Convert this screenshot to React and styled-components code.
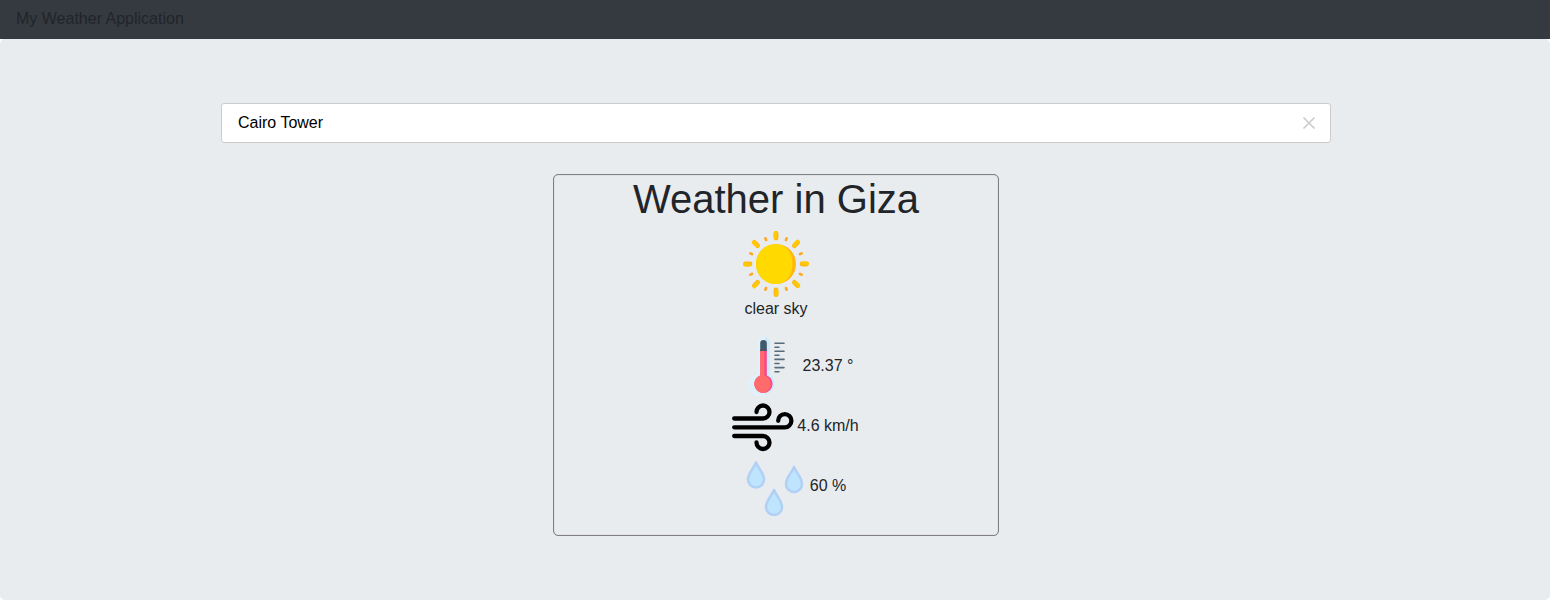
import React from 'react';
import styled, { createGlobalStyle } from 'styled-components';

const GlobalStyle = createGlobalStyle`
  *, *::before, *::after { box-sizing: border-box; }
  body {
    margin: 0;
    background: #fff;
    color: #212529;
    font: 16px/24px "Liberation Sans", Arial, sans-serif;
  }
`;

const Header = styled.header`
  padding: 7px 16px 8px;
  background: #343a40;
`;

const Jumbotron = styled.main`
  padding: 64px 31px 64px 33px;
  background: #e9ecef;
  border-radius: 5px;
`;

const Container = styled.div`
  max-width: 1110px;
  margin: 0 auto;
`;

const SearchBox = styled.form`
  display: flex;
  align-items: center;
  height: 40px;
  margin-bottom: 31px;
  padding: 0 14px 0 16px;
  background: #fff;
  border: 1px solid #ccc;
  border-radius: 3px;
`;

const SearchInput = styled.input`
  flex: 1;
  min-width: 0;
  padding: 0;
  border: 0;
  outline: 0;
  background: transparent;
  color: #000;
  font: inherit;
`;

const ClearButton = styled.button`
  display: flex;
  padding: 0;
  border: 0;
  background: none;
  cursor: pointer;
`;

const Card = styled.section`
  width: 446px;
  max-width: 100%;
  margin: 0 auto;
  padding-bottom: 19px;
  border: 1px solid #808080;
  border-radius: 5px;
  box-shadow: inset 0 0 1px #808080;
  text-align: center;
`;

const Title = styled.h1`
  margin: 0 0 8px;
  font-size: 40px;
  font-weight: 500;
  line-height: 48px;
`;

const Condition = styled.figure`
  display: flex;
  flex-direction: column;
  align-items: center;
  margin: 0 0 15px;
`;

const Readings = styled.ul`
  margin: 0;
  padding: 0 0 0 40px;
  list-style: none;
`;

const Reading = styled.li`
  display: flex;
  justify-content: center;
  align-items: center;
  gap: 4px;
  height: 60px;
`;

const rays = Array.from({ length: 8 }, (_, i) => i * 45);

function SunIcon() {
  return (
    <svg width="66" height="66" viewBox="-33 -33 66 66" aria-hidden="true">
      {rays.map((a) => (
        <g key={a} transform={`rotate(${a})`}>
          <rect x="-2.4" y="-33" width="4.8" height="9.4" rx="2.4" fill="#ffb70f" />
          <rect x="-2.4" y="-33" width="3.6" height="8" rx="1.8" fill="#ffc90a" />
        </g>
      ))}
      {rays.map((a) => (
        <path
          key={a}
          d="M0-27.8v1.8"
          transform={`rotate(${a + 22.5})`}
          stroke="#ffa51f"
          strokeWidth="2.6"
          strokeLinecap="round"
        />
      ))}
      <circle r="20" fill="#ffb70f" />
      <path d="M0-20a20 20 0 0 0 0 40c10 0 16.500-9 16.500-20s-6.500-20-16.500-20z" fill="#ffd900" />
    </svg>
  );
}

function ThermometerIcon() {
  return (
    <svg width="60" height="60" viewBox="1 0 60 60" aria-hidden="true">
      <path d="M19 7a6.5 6.5 0 0 1 13 0v31.500a11 11 0 1 1-13 0z" fill="#cdeafa" />
      <path d="M19 7a6.500 6.500 0 0 1 8-6.300v39l2 17.300a11 11 0 1 1-10-18.500z" fill="#e0f1fc" />
      <path d="M22.200 13h6.600v26.500a9 9 0 1 1-6.600 0z" fill="#f9438f" />
      <path d="M22.200 13h4.200v26.500a9 9 0 0 1-1 17.500a9 9 0 0 1-3.200-17.500z" fill="#ff6b6b" />
      <path d="M22.200 15V7.300a3.300 3.300 0 0 1 6.600 0V15z" fill="#415a6b" />
      <path
        d="M37 7.200h9M37 11.300h4M37 15.300h9M37 19.300h4M37 23.400h9M37 27.500h4M37 31.600h9M37 35.700h4"
        stroke="#566b7b"
        strokeWidth="1.600"
        strokeLinecap="round"
      />
    </svg>
  );
}

const WindDrawing = styled.svg`
  overflow: visible;
`;

function WindIcon() {
  return (
    <WindDrawing
      width="60"
      height="60"
      viewBox="2 0 60 60"
      fill="none"
      stroke="#000"
      strokeWidth="4.300"
      strokeLinecap="round"
      aria-hidden="true"
    >
      <path d="M3.200 22.500H32a6.500 6.500 0 1 0-6.500-6.500" />
      <path d="M3.200 31.300H53.700a6.600 6.600 0 1 0-6.500-6.500" />
      <path d="M3.200 40H32a6.500 6.500 0 1 1-6.500 6.500" />
    </WindDrawing>
  );
}

function DropsIcon() {
  const drop = 'M0-12.500c2 5.500 8 10.500 8 17a8 8 0 0 1-16 0c0-6.500 6-11.500 8-17z';
  return (
    <svg
      width="60"
      height="60"
      viewBox="1 -1 60 60"
      fill="#bfe5fe"
      stroke="#b0d0f6"
      strokeWidth="2.500"
      strokeLinejoin="round"
      aria-hidden="true"
    >
      <path d={drop} transform="translate(11 18)" />
      <path d={drop} transform="translate(49 22.500)" />
      <path d={drop} transform="translate(29 45.500)" />
    </svg>
  );
}

export default function App() {
  return (
    <>
      <GlobalStyle />
      <Header>My Weather Application</Header>
      <Jumbotron>
        <Container>
          <SearchBox onSubmit={(e) => e.preventDefault()}>
            <SearchInput aria-label="Search for a place" defaultValue="Cairo Tower" />
            <ClearButton type="reset" aria-label="Clear">
              <svg width="14" height="14" viewBox="0 0 14 14" stroke="#ccc" strokeWidth="1.700">
                <path d="M1.500 1.500l11 11M12.500 1.500l-11 11" />
              </svg>
            </ClearButton>
          </SearchBox>
          <Card>
            <Title>Weather in Giza</Title>
            <Condition>
              <SunIcon />
              <figcaption>clear sky</figcaption>
            </Condition>
            <Readings>
              <Reading><ThermometerIcon />23.37 °</Reading>
              <Reading><WindIcon />4.6 km/h</Reading>
              <Reading><DropsIcon />60 %</Reading>
            </Readings>
          </Card>
        </Container>
      </Jumbotron>
    </>
  );
}
